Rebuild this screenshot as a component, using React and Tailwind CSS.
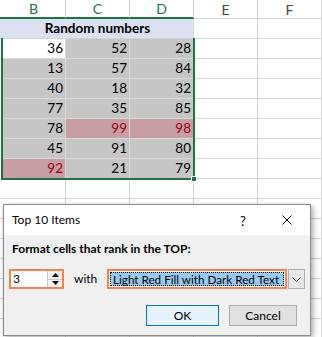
import React from 'react';

const data = [
  [36, 52, 28],
  [13, 57, 84],
  [40, 18, 32],
  [77, 35, 85],
  [78, 99, 98],
  [45, 91, 80],
  [92, 21, 79],
];

const isRed = (r, c) => (r === 4 && (c === 1 || c === 2)) || (r === 6 && c === 0);

function EmptyCell() {
  return <div className="w-[64px] h-full border-r border-b border-[#d4d4d4] bg-white" />;
}

function DataRow({ row, r }) {
  return (
    <div className="flex h-[20px]">
      <div className="w-[2px] border-b border-[#d4d4d4]" />
      {row.map((v, c) => {
        let bg = 'bg-[#c6c6c6] text-black';
        if (r === 0 && c === 0) bg = 'bg-white text-black';
        if (isRed(r, c)) bg = 'bg-[#c79ea4] text-[#9c0006]';
        return (
          <div
            key={c}
            className={`w-[64px] h-full border-r border-b border-[#dadada] flex items-center justify-end pr-[2px] text-[13.5px] ${bg}`}
          >
            {v}
          </div>
        );
      })}
      <EmptyCell />
      <EmptyCell />
    </div>
  );
}

function BlankRow() {
  return (
    <div className="flex h-[20px] shrink-0">
      <div className="w-[2px] border-b border-[#d4d4d4]" />
      <EmptyCell />
      <EmptyCell />
      <EmptyCell />
      <EmptyCell />
      <EmptyCell />
    </div>
  );
}

function Sheet() {
  return (
    <div className="flex flex-col font-[Lato,sans-serif]">
      <div className="flex h-[19px]">
        <div className="w-[2px] border-b-2 border-[#217346]" />
        {['B', 'C', 'D'].map((c) => (
          <div
            key={c}
            className="w-[64px] h-full border-r border-r-[#d4d4d4] border-b-2 border-b-[#217346] flex items-center justify-center text-[14px] text-[#217346]"
          >
            {c}
          </div>
        ))}
        {['E', 'F'].map((c) => (
          <div
            key={c}
            className="w-[64px] h-full border-r border-b border-[#d4d4d4] flex items-center justify-center text-[14px] text-[#444]"
          >
            {c}
          </div>
        ))}
      </div>
      <div className="flex h-[20px]">
        <div className="w-[2px] bg-[#dbe1f1] border-b border-[#d4d4d4]" />
        <div className="w-[192px] h-full bg-[#dbe1f1] border-r border-b border-[#d4d4d4] flex items-center justify-center font-bold text-[13.5px] text-black">
          Random numbers
        </div>
        <EmptyCell />
        <EmptyCell />
      </div>
      {data.map((row, r) => (
        <DataRow key={r} row={row} r={r} />
      ))}
      {Array.from({ length: 8 }).map((_, i) => (
        <BlankRow key={i} />
      ))}
    </div>
  );
}

function Dialog() {
  return (
    <div className="absolute left-[3px] top-[204px] w-[308px] h-[132px] border border-[#8a8a8a] bg-[#f0f0f0] shadow-[2px_2px_6px_rgba(0,0,0,0.35)] font-[Lato,sans-serif] text-[12px] text-black flex flex-col">
      <div className="h-[30px] bg-white flex items-center pl-[8px] relative">
        <span>Top 10 Items</span>
        <span className="absolute left-[236px] top-[7px] text-[13px]">?</span>
        <svg className="absolute left-[278px] top-[10px]" width="10" height="10" viewBox="0 0 10 10">
          <path d="M0.5 0.5 L9.5 9.5 M9.5 0.5 L0.5 9.5" stroke="#000" strokeWidth="1" />
        </svg>
      </div>
      <div className="pl-[8px] pt-[6px] font-bold leading-[16px]">Format cells that rank in the TOP:</div>
      <div className="flex items-center mt-[12px] pl-[5px] h-[20px]">
        <div className="w-[55px] h-[20px] border-2 border-[#f5844a] bg-white flex">
          <div className="flex-1 pl-[2px] leading-[16px]">3</div>
          <div className="w-[15px] flex flex-col border-l border-[#c8c8c8]">
            <div className="flex-1 flex items-center justify-center border-b border-[#c8c8c8] bg-[#f4f4f4]">
              <svg width="7" height="4" viewBox="0 0 7 4"><path d="M0 4 L3.5 0 L7 4 Z" fill="#000" /></svg>
            </div>
            <div className="flex-1 flex items-center justify-center bg-[#f4f4f4]">
              <svg width="7" height="4" viewBox="0 0 7 4"><path d="M0 0 L3.5 4 L7 0 Z" fill="#000" /></svg>
            </div>
          </div>
        </div>
        <span className="ml-[10px] w-[33px]">with</span>
        <div className="w-[180px] h-[20px] border-2 border-[#f5844a] bg-white p-[1px]">
          <div className="h-full bg-[#99c9ef] border border-dotted border-black flex items-center pl-[2px] leading-[14px] text-[11.7px] whitespace-nowrap">
            Light Red Fill with Dark Red Text
          </div>
        </div>
        <div className="w-[17px] h-[20px] ml-[1px] border border-[#adadad] bg-[#e8e8e8] flex items-center justify-center">
          <svg width="9" height="5" viewBox="0 0 9 5"><path d="M0.5 0.5 L4.5 4.5 L8.5 0.5" stroke="#444" fill="none" strokeWidth="1" /></svg>
        </div>
      </div>
      <div className="flex mt-[16px] pl-[142px] gap-[10px]">
        <button className="w-[73px] h-[21px] border border-[#0078d7] bg-[#e5f1fb] text-[12px] leading-none">OK</button>
        <button className="w-[68px] h-[21px] border border-[#adadad] bg-[#e1e1e1] text-[12px] leading-none">Cancel</button>
      </div>
    </div>
  );
}

export default function App() {
  return (
    <div className="relative w-[322px] h-[337px] overflow-hidden bg-white">
      <Sheet />
      <div className="absolute left-[1px] top-[38px] w-[194px] h-[142px] border-2 border-t-0 border-[#217346] pointer-events-none" />
      <div className="absolute left-[191px] top-[176px] w-[6px] h-[6px] bg-[#217346] border border-white" />
      <Dialog />
    </div>
  );
}
